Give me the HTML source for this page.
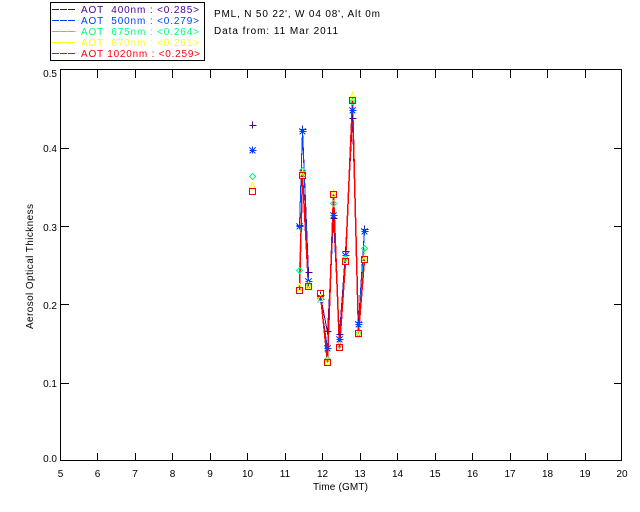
<!DOCTYPE html>
<html><head><meta charset="utf-8"><style>
html,body{margin:0;padding:0;background:#fff;width:640px;height:512px;overflow:hidden}
svg{display:block}
text{font-family:"Liberation Sans",sans-serif;font-size:10px;fill:#000}
</style></head><body>
<svg width="640" height="512" viewBox="0 0 640 512" xmlns="http://www.w3.org/2000/svg">
<defs>
<g id="pl"><path d="M-3 0H4M0-4V3"/></g>
<g id="st"><path d="M-3 0H4M0-4V3M-3-3L3 3M-3 3L3-3"/></g>
<g id="di"><path d="M0-3L3 0L0 3L-3 0Z"/></g>
<g id="tr"><path d="M0-4L3 3H-3Z"/></g>
<g id="sq"><path d="M-3-3H3V3H-3Z"/></g>
</defs>
<g shape-rendering="crispEdges" fill="none" stroke="#000" stroke-width="1">
<rect x="50.5" y="2.5" width="154" height="58"/>
<rect x="60.5" y="69.5" width="561" height="391"/>
<path d="M97.5 461v-8M135.5 461v-8M172.5 461v-8M210.5 461v-8M247.5 461v-8M285.5 461v-8M322.5 461v-8M360.5 461v-8M397.5 461v-8M435.5 461v-8M472.5 461v-8M510.5 461v-8M547.5 461v-8M585.5 461v-8"/>
<path d="M97.5 70v8M135.5 70v8M172.5 70v8M210.5 70v8M247.5 70v8M285.5 70v8M322.5 70v8M360.5 70v8M397.5 70v8M435.5 70v8M472.5 70v8M510.5 70v8M547.5 70v8M585.5 70v8"/>
<path d="M61 383.5h8M61 304.5h8M61 226.5h8M61 148.5h8M622 383.5h-8M622 304.5h-8M622 226.5h-8M622 148.5h-8"/>
</g>
<g shape-rendering="crispEdges" fill="none" stroke-width="1">
<path stroke="#4b0096" stroke-dasharray="7 1" d="M52 9.5H75"/>
<path stroke="#0040ff" stroke-dasharray="7 1" d="M52 20.5H75"/>
<path stroke="#00ff80" stroke-dasharray="7 1" d="M52 31.5H75"/>
<path stroke="#ffff00" stroke-dasharray="7 1" d="M52 42.5H75"/>
<path stroke="#ff0000" stroke-dasharray="7 1" d="M52 53.5H75"/>

<path stroke="#4b0096" d="M299.5 225.5L302.5 129.5L308.5 272.5M320.5 295.5L327.5 332.5L333.5 218.5L339.5 334.5L345.5 251.5L352.5 118.5L358.5 322.5L364.5 229.5"/>
<path stroke="#0040ff" d="M299.5 226.5L302.5 131.5L308.5 281.5M320.5 299.5L327.5 348.5L333.5 215.5L339.5 339.5L345.5 255.5L352.5 111.5L358.5 324.5L364.5 231.5"/>
<path stroke="#00ff80" d="M299.5 270.5L302.5 170.5L308.5 285.5M320.5 298.5L327.5 359.5L333.5 203.5L339.5 345.5L345.5 258.5L352.5 101.5L358.5 333.5L364.5 248.5"/>
<path stroke="#ffff00" d="M299.5 287.5L302.5 174.5L308.5 285.5M320.5 298.5L327.5 361.5L333.5 193.5L339.5 346.5L345.5 260.5L352.5 96.5L358.5 334.5L364.5 258.5"/>
<path stroke="#ff0000" stroke-width="1.5" d="M299.5 290.5L302.5 175.5L308.5 286.5M320.5 294.5L327.5 362.5L333.5 194.5L339.5 347.5L345.5 261.5L352.5 100.5L358.5 333.5L364.5 259.5"/>

<g stroke="#4b0096">
<use href="#pl" x="252.5" y="125.5"/><use href="#pl" x="299.5" y="225.5"/><use href="#pl" x="302.5" y="129.5"/><use href="#pl" x="308.5" y="272.5"/><use href="#pl" x="320.5" y="295.5"/><use href="#pl" x="327.5" y="331.5"/><use href="#pl" x="333.5" y="218.5"/><use href="#pl" x="339.5" y="334.5"/><use href="#pl" x="345.5" y="251.5"/><use href="#pl" x="352.5" y="118.5"/><use href="#pl" x="358.5" y="322.5"/><use href="#pl" x="364.5" y="229.5"/>
</g>
<g stroke="#0040ff">
<use href="#st" x="252.5" y="150.5"/><use href="#st" x="299.5" y="226.5"/><use href="#st" x="302.5" y="131.5"/><use href="#st" x="308.5" y="281.5"/><use href="#st" x="320.5" y="299.5"/><use href="#st" x="327.5" y="348.5"/><use href="#st" x="333.5" y="215.5"/><use href="#st" x="339.5" y="339.5"/><use href="#st" x="345.5" y="255.5"/><use href="#st" x="352.5" y="110.5"/><use href="#st" x="358.5" y="324.5"/><use href="#st" x="364.5" y="231.5"/>
</g>
<g stroke="#00ff80">
<use href="#di" x="252.5" y="176.5"/><use href="#di" x="299.5" y="270.5"/><use href="#di" x="302.5" y="170.5"/><use href="#di" x="308.5" y="285.5"/><use href="#di" x="320.5" y="298.5"/><use href="#di" x="327.5" y="359.5"/><use href="#di" x="333.5" y="203.5"/><use href="#di" x="339.5" y="345.5"/><use href="#di" x="345.5" y="258.5"/><use href="#di" x="352.5" y="101.5"/><use href="#di" x="358.5" y="333.5"/><use href="#di" x="364.5" y="248.5"/>
</g>
<g stroke="#ffff00">
<use href="#tr" x="252.5" y="186.5"/><use href="#tr" x="299.5" y="287.5"/><use href="#tr" x="302.5" y="174.5"/><use href="#tr" x="308.5" y="285.5"/><use href="#tr" x="320.5" y="298.5"/><use href="#tr" x="327.5" y="361.5"/><use href="#tr" x="333.5" y="193.5"/><use href="#tr" x="339.5" y="346.5"/><use href="#tr" x="345.5" y="260.5"/><use href="#tr" x="352.5" y="96.5"/><use href="#tr" x="358.5" y="334.5"/><use href="#tr" x="364.5" y="258.5"/>
</g>
<g stroke="#ff0000">
<use href="#sq" x="252.5" y="191.5"/><use href="#sq" x="299.5" y="290.5"/><use href="#sq" x="302.5" y="175.5"/><use href="#sq" x="308.5" y="286.5"/><use href="#sq" x="320.5" y="293.5"/><use href="#sq" x="327.5" y="362.5"/><use href="#sq" x="333.5" y="194.5"/><use href="#sq" x="339.5" y="347.5"/><use href="#sq" x="345.5" y="261.5"/><use href="#sq" x="352.5" y="100.5"/><use href="#sq" x="358.5" y="333.5"/><use href="#sq" x="364.5" y="259.5"/>
</g>
</g>

<text x="81" y="13" style="fill:#4b0096" xml:space="preserve" textLength="118">AOT  400nm : &lt;0.285&gt;</text>
<text x="81" y="24" style="fill:#0040ff" xml:space="preserve" textLength="118">AOT  500nm : &lt;0.279&gt;</text>
<text x="81" y="35" style="fill:#00ff80" xml:space="preserve" textLength="118">AOT  675nm : &lt;0.264&gt;</text>
<text x="81" y="46" style="fill:#ffff00" xml:space="preserve" textLength="118">AOT  870nm : &lt;0.261&gt;</text>
<text x="81" y="57" style="fill:#ff0000" xml:space="preserve" textLength="119">AOT 1020nm : &lt;0.259&gt;</text>

<text x="214" y="17" textLength="166">PML, N 50 22', W 04 08', Alt 0m</text>
<text x="214" y="34" textLength="124">Data from: 11 Mar 2011</text>

<g text-anchor="end">
<text x="57" y="462">0.0</text>
<text x="57" y="387">0.1</text>
<text x="57" y="309">0.2</text>
<text x="57" y="231">0.3</text>
<text x="57" y="152">0.4</text>
<text x="57" y="77">0.5</text>
</g>
<g text-anchor="middle">
<text x="60.5" y="477">5</text><text x="97.5" y="477">6</text><text x="135" y="477">7</text><text x="172.5" y="477">8</text><text x="210" y="477">9</text><text x="247.5" y="477">10</text><text x="285" y="477">11</text><text x="322.5" y="477">12</text><text x="360" y="477">13</text><text x="397.5" y="477">14</text><text x="435" y="477">15</text><text x="472.5" y="477">16</text><text x="510" y="477">17</text><text x="547.5" y="477">18</text><text x="585" y="477">19</text><text x="622" y="477">20</text>
</g>
<text x="313" y="490" textLength="55">Time (GMT)</text>
<text transform="translate(33 329) rotate(-90)" textLength="125">Aerosol Optical Thickness</text>
</svg>
</body></html>
